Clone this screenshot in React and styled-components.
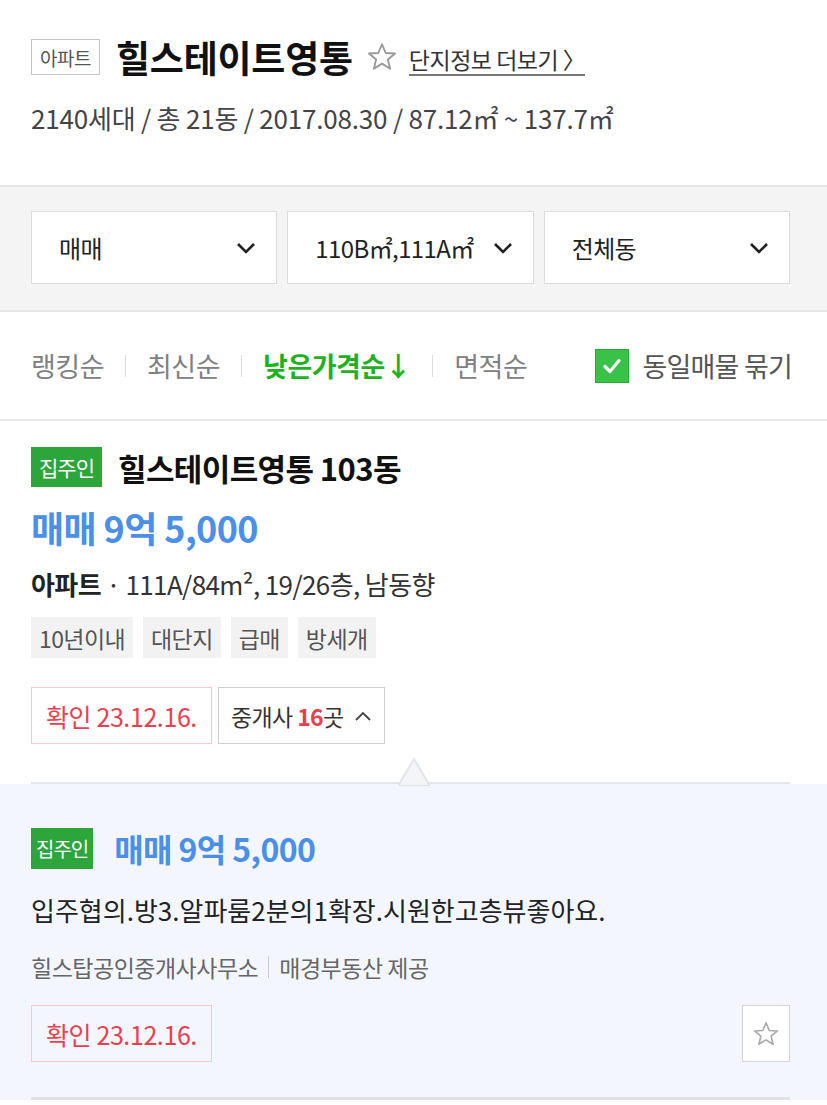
import React from "react";
import styled, { createGlobalStyle } from "styled-components";

const Global = createGlobalStyle`
  html, body { margin: 0; padding: 0; background: #fff; }
  body { font-family: "Noto Sans CJK KR", "Noto Sans", sans-serif; color: #222; }
  * { box-sizing: border-box; }
`;

const Page = styled.div`
  width: 827px;
  min-height: 1105px;
  background: #fff;
  overflow: hidden;
`;

const Header = styled.header`
  padding: 34px 31px 49px;
`;

const TitleRow = styled.div`
  display: flex;
  align-items: center;
  height: 46px;
`;

const TypeBadge = styled.span`
  display: inline-flex;
  align-items: center;
  justify-content: center;
  height: 36px;
  padding: 0 8px;
  border: 1px solid #c4c4c4;
  color: #555;
  font-size: 19px;
  letter-spacing: -0.5px;
  margin-right: 16px;
`;

const Title = styled.h1`
  margin: 0;
  font-size: 37px;
  font-weight: 700;
  letter-spacing: -0.2px;
  color: #111;
  line-height: 46px;
`;

const StarWrap = styled.span`
  display: inline-flex;
  margin: 0 11px 0 13px;
`;

const MoreLink = styled.a`
  font-size: 23px;
  color: #333;
  letter-spacing: -0.5px;
  text-decoration: none;
  border-bottom: 2px solid #777;
  line-height: 30px;
  margin-top: 6px;
`;

const SubInfo = styled.div`
  margin-top: 20px;
  font-size: 26px;
  line-height: 36px;
  color: #444;
  letter-spacing: -0.2px;
`;

const FilterBar = styled.div`
  background: #f4f4f4;
  border-top: 2px solid #e6e6e6;
  border-bottom: 2px solid #e6e6e6;
  padding: 24px 37px 26px 31px;
  display: grid;
  grid-template-columns: 1fr 1fr 1fr;
  gap: 10px;
`;

const Select = styled.div`
  height: 73px;
  background: #fff;
  border: 1px solid #dcdcdc;
  display: flex;
  align-items: center;
  justify-content: space-between;
  padding: 0 20px 0 27px;
  font-size: 24px;
  color: #222;
  letter-spacing: -0.6px;
`;

const Chevron = () => (
  <svg width="20" height="14" viewBox="0 0 20 14">
    <polyline points="2,3 10,11 18,3" fill="none" stroke="#222" strokeWidth="2.6" />
  </svg>
);

const SortBar = styled.div`
  height: 109px;
  border-bottom: 2px solid #e8e8e8;
  display: flex;
  align-items: center;
  padding: 0 35px 0 31px;
`;

const SortItem = styled.span`
  font-size: 27px;
  letter-spacing: -0.5px;
  color: ${(p) => (p.$active ? "#1fb21f" : "#808080")};
  font-weight: ${(p) => (p.$active ? 700 : 400)};
`;

const SortSep = styled.span`
  width: 1px;
  height: 22px;
  background: #ddd;
  margin: 0 21px;
`;

const Bundle = styled.label`
  margin-left: auto;
  display: flex;
  align-items: center;
  gap: 14px;
  font-size: 27px;
  color: #555;
  letter-spacing: -0.8px;
`;

const CheckBox = styled.span`
  width: 34px;
  height: 34px;
  background: #38c248;
  border: 1px solid #2aa83a;
  display: inline-flex;
  align-items: center;
  justify-content: center;
`;

const Listing = styled.section`
  padding: 24px 31px 0;
`;

const OwnerBadge = styled.span`
  display: inline-flex;
  align-items: center;
  justify-content: center;
  background: #2ca63a;
  color: #fff;
  font-size: ${(p) => (p.$small ? "20px" : "21px")};
  height: ${(p) => (p.$small ? "41px" : "40px")};
  padding: 0 ${(p) => (p.$small ? "5px" : "8px")};
  letter-spacing: -1px;
  margin-right: ${(p) => (p.$small ? "21px" : "16px")};
`;

const ListTitleRow = styled.div`
  display: flex;
  align-items: center;
  height: 44px;
`;

const ListTitle = styled.h2`
  margin: 0;
  font-size: 31px;
  font-weight: 700;
  letter-spacing: -0.6px;
  color: #111;
`;

const Price = styled.div`
  font-size: ${(p) => (p.$small ? "32px" : "36px")};
  line-height: 44px;
  font-weight: 700;
  color: #4a8fe9;
  letter-spacing: -0.6px;
  margin-top: ${(p) => (p.$inline ? "0" : "16px")};
`;

const Detail = styled.div`
  margin-top: 17px;
  font-size: 26px;
  line-height: 36px;
  color: #333;
  letter-spacing: -0.6px;
  b { font-weight: 700; color: #222; }
`;

const Tags = styled.div`
  display: flex;
  gap: 10px;
  margin-top: 15px;
`;

const Tag = styled.span`
  height: 41px;
  padding: 0 8px;
  display: inline-flex;
  align-items: center;
  background: #f2f2f2;
  color: #555;
  font-size: 23px;
  letter-spacing: -0.6px;
`;

const ActionRow = styled.div`
  display: flex;
  align-items: center;
  gap: 6px;
  margin-top: ${(p) => p.$mt || "29px"};
`;

const Confirm = styled.span`
  height: 57px;
  display: inline-flex;
  align-items: center;
  padding: 0 14px;
  border: 1px solid #fbc6cb;
  color: #ea3f4c;
  font-size: 25px;
  letter-spacing: -0.4px;
`;

const BrokerBtn = styled.span`
  height: 57px;
  display: inline-flex;
  align-items: center;
  padding: 0 12px;
  border: 1px solid #cfcfcf;
  color: #333;
  font-size: 23px;
  letter-spacing: -0.6px;
  gap: 10px;
  b { color: #ea3f4c; font-weight: 700; }
`;

const Panel = styled.div`
  margin-top: 38px;
  background: linear-gradient(#fff 0 2px, #f3f7fd 2px);
`;

const PanelInner = styled.div`
  position: relative;
  margin: 0 37px 0 31px;
  border-top: 2px solid #e2e6ea;
  border-bottom: 3px solid #e0e3e6;
  padding: 42px 0 35px;
`;

const Caret = styled.span`
  position: absolute;
  left: 367px;
  top: -26px;
  width: 32px;
  height: 26px;
  svg { display: block; }
`;

const PanelHead = styled.div`
  display: flex;
  align-items: center;
  height: 44px;
`;

const Desc = styled.div`
  margin-top: 22px;
  font-size: 26px;
  line-height: 36px;
  color: #222;
  letter-spacing: 0;
`;

const Agent = styled.div`
  margin-top: 24px;
  display: flex;
  align-items: center;
  font-size: 23px;
  line-height: 30px;
  color: #666;
  letter-spacing: -0.5px;
`;

const AgentSep = styled.span`
  width: 1px;
  height: 22px;
  background: #ccc;
  margin: 0 10px;
`;

const FavBtn = styled.span`
  margin-left: auto;
  width: 48px;
  height: 57px;
  border: 1px solid #d4d4d4;
  background: #fff;
  display: inline-flex;
  align-items: center;
  justify-content: center;
`;

const Star = ({ size = 28, color = "#aaa" }) => (
  <svg width={size} height={size} viewBox="0 0 24 24">
    <polygon
      points="12,2.5 14.8,9 21.8,9.4 16.4,13.9 18.1,20.8 12,17 5.9,20.8 7.6,13.9 2.2,9.4 9.2,9"
      fill="none"
      stroke={color}
      strokeWidth="1.4"
      strokeLinejoin="round"
    />
  </svg>
);

export default function App() {
  return (
    <Page>
      <Global />
      <Header>
        <TitleRow>
          <TypeBadge>아파트</TypeBadge>
          <Title>힐스테이트영통</Title>
          <StarWrap>
            <Star size={32} color="#999" />
          </StarWrap>
          <MoreLink>단지정보 더보기 〉</MoreLink>
        </TitleRow>
        <SubInfo>2140세대 / 총 21동 / 2017.08.30 / 87.12㎡ ~ 137.7㎡</SubInfo>
      </Header>

      <FilterBar>
        <Select>
          <span>매매</span>
          <Chevron />
        </Select>
        <Select>
          <span>110B㎡,111A㎡</span>
          <Chevron />
        </Select>
        <Select>
          <span>전체동</span>
          <Chevron />
        </Select>
      </FilterBar>

      <SortBar>
        <SortItem>랭킹순</SortItem>
        <SortSep />
        <SortItem>최신순</SortItem>
        <SortSep />
        <SortItem $active>낮은가격순↓</SortItem>
        <SortSep />
        <SortItem>면적순</SortItem>
        <Bundle>
          <CheckBox>
            <svg width="22" height="22" viewBox="0 0 22 22">
              <polyline points="4,11.5 9,16.5 18,5.5" fill="none" stroke="#fff" strokeWidth="3.2" strokeLinecap="round" strokeLinejoin="round" />
            </svg>
          </CheckBox>
          동일매물 묶기
        </Bundle>
      </SortBar>

      <Listing>
        <ListTitleRow>
          <OwnerBadge>집주인</OwnerBadge>
          <ListTitle>힐스테이트영통 103동</ListTitle>
        </ListTitleRow>
        <Price>매매 9억 5,000</Price>
        <Detail>
          <b>아파트</b> · 111A/84m², 19/26층, 남동향
        </Detail>
        <Tags>
          <Tag>10년이내</Tag>
          <Tag>대단지</Tag>
          <Tag>급매</Tag>
          <Tag>방세개</Tag>
        </Tags>
        <ActionRow>
          <Confirm>확인 23.12.16.</Confirm>
          <BrokerBtn>
            <span>
              중개사 <b>16</b>곳
            </span>
            <svg width="18" height="12" viewBox="0 0 18 12">
              <polyline points="2,10 9,3 16,10" fill="none" stroke="#444" strokeWidth="1.8" />
            </svg>
          </BrokerBtn>
        </ActionRow>
      </Listing>

      <Panel>
        <PanelInner>
          <Caret>
            <svg width="32" height="28" viewBox="0 0 32 28">
              <polygon points="0,28 16,1 32,28" fill="#f3f5f8" stroke="#e2e6ea" strokeWidth="2" />
            </svg>
          </Caret>
          <PanelHead>
            <OwnerBadge $small>집주인</OwnerBadge>
            <Price $small $inline>매매 9억 5,000</Price>
          </PanelHead>
          <Desc>입주협의.방3.알파룸2분의1확장.시원한고층뷰좋아요.</Desc>
          <Agent>
            힐스탑공인중개사사무소
            <AgentSep />
            매경부동산 제공
          </Agent>
          <ActionRow $mt="23px">
            <Confirm>확인 23.12.16.</Confirm>
            <FavBtn>
              <Star size={28} color="#aaa" />
            </FavBtn>
          </ActionRow>
        </PanelInner>
      </Panel>
    </Page>
  );
}
